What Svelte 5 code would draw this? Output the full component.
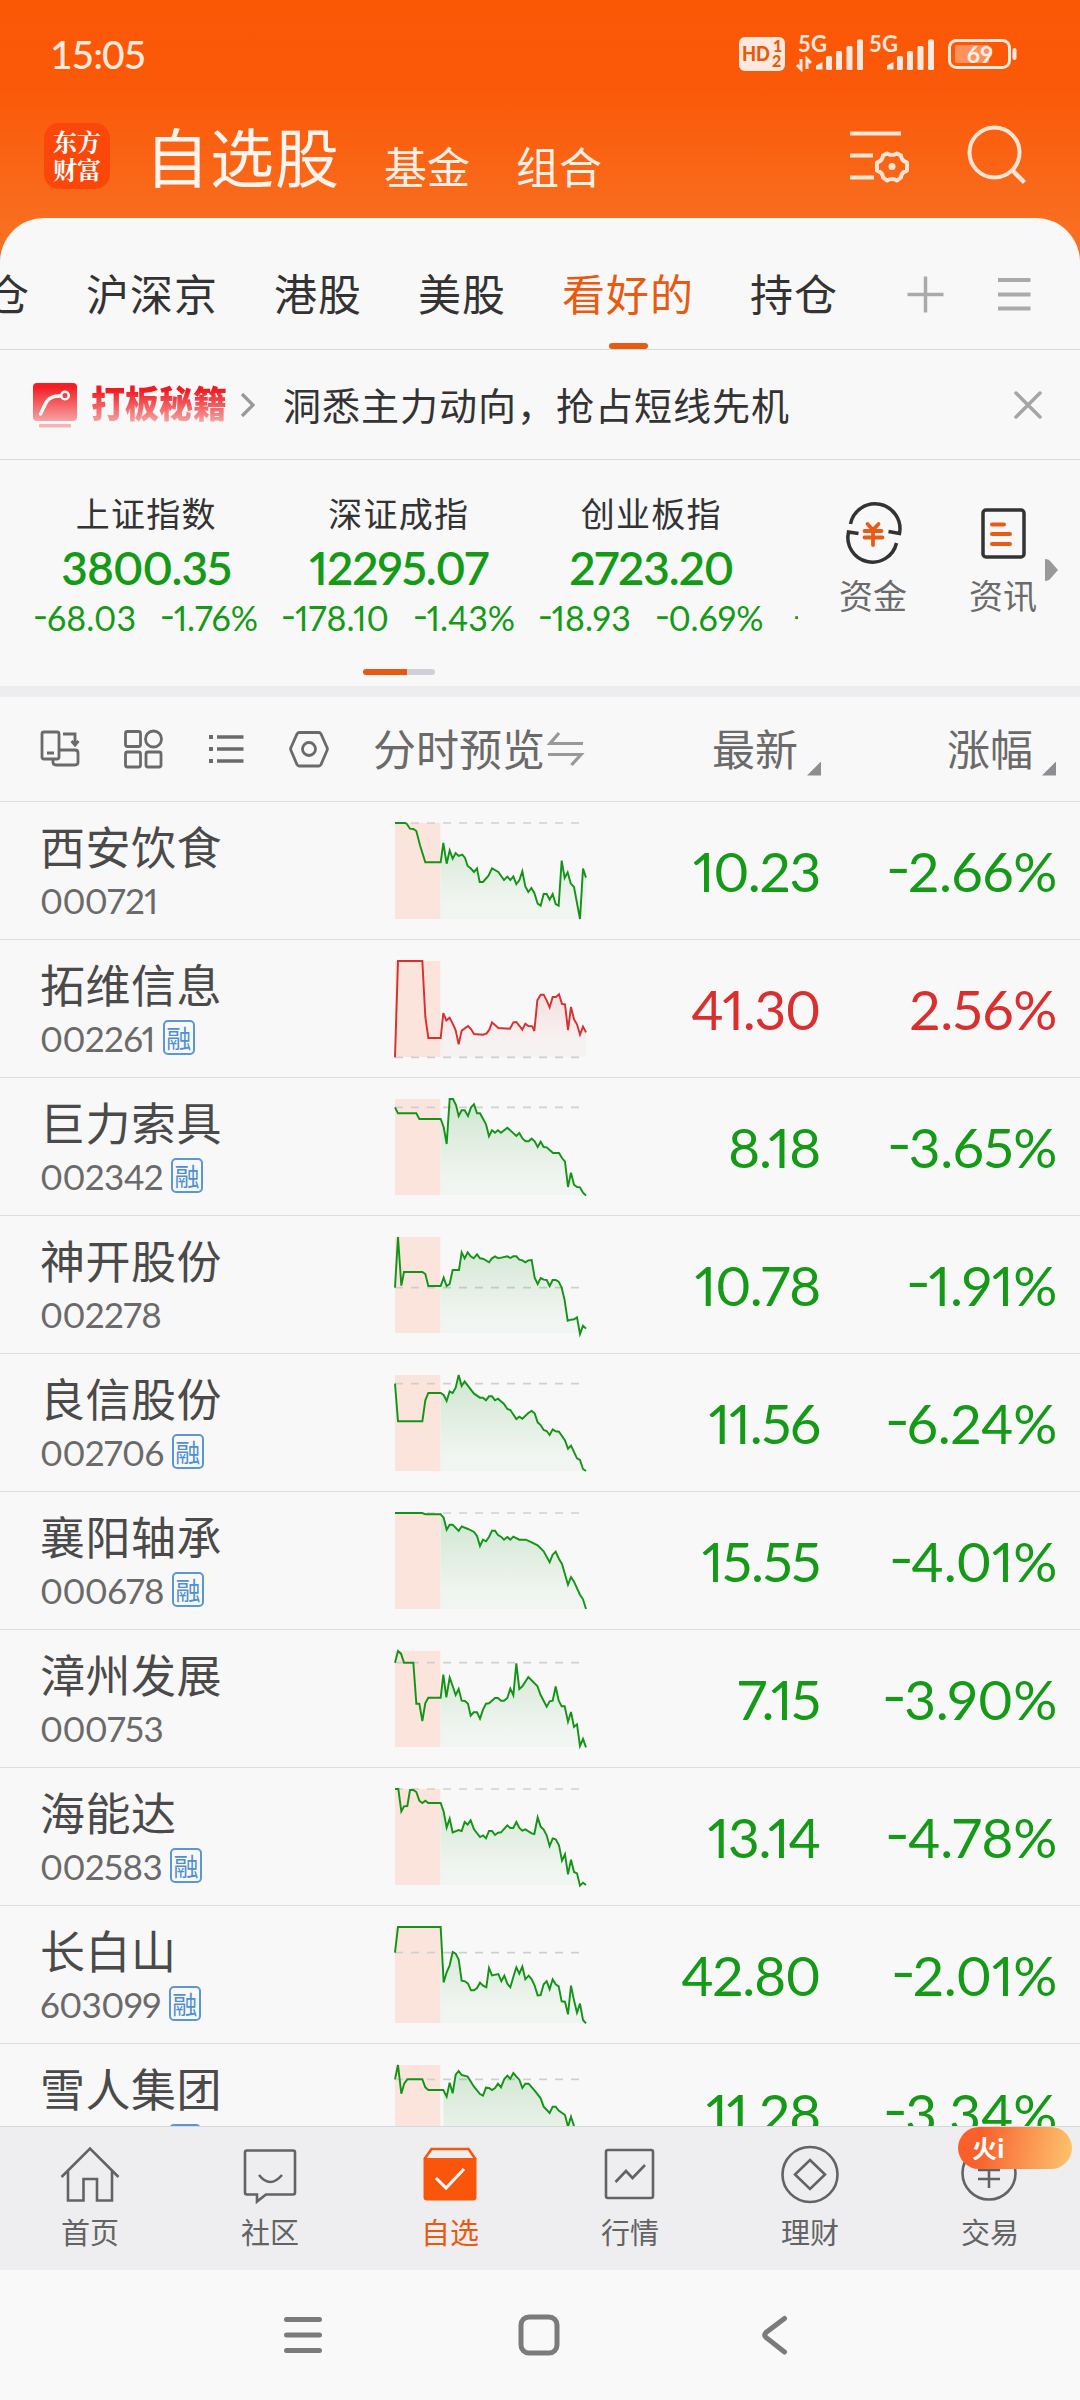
<script lang="ts">
	type Stock = {
		name: string;
		code: string;
		margin: boolean;
		price: string;
		pct: string;
		top: number;
		base: number;
		line: string;
	};

	const tabs = ['持仓', '沪深京', '港股', '美股', '看好的', '持仓'];
	const activeTab = 4;

	const indices = [
		{ name: '上证指数', value: '3800.35', diff: '-68.03', pct: '-1.76%' },
		{ name: '深证成指', value: '12295.07', diff: '-178.10', pct: '-1.43%' },
		{ name: '创业板指', value: '2723.20', diff: '-18.93', pct: '-0.69%' }
	];

	const navItems = ['首页', '社区', '自选', '行情', '理财', '交易'];

	// line: intraday points, top: y of the chart's upper edge, base: y of yesterday's close
	const stocks: Stock[] = [
		{
			name: '西安饮食', code: '000721', margin: false, price: '10.23', pct: '-2.66%', top: 98, base: 98,
			line: '45,98 75,98 80,100 90,115 100,116 109,122 120,165 136,216 182,216 190,158 200,220 209,180 218,205 227,188 236,197 247,193 255,203 263,227 272,234 282,245 291,234 299,275 309,275 325,257 336,234 355,245 372,269 382,259 391,269 400,258 409,281 418,270 427,243 436,288 445,305 454,293 463,308 473,340 482,346 491,311 500,311 509,328 518,311 527,341 536,346 545,211 554,263 563,246 572,279 582,290 600,386 609,235 618,262'
		},
		{
			name: '拓维信息', code: '002261', margin: true, price: '41.30', pct: '2.56%', top: 512, base: 801,
			line: '45,801 54,512 127,512 136,680 145,743 182,743 190,668 199,690 209,682 222,708 227,720 236,762 245,721 264,707 273,716 282,731 309,733 320,729 328,718 336,696 355,713 390,715 400,696 409,695 427,718 436,700 445,707 457,708 463,722 472,630 482,613 491,613 500,630 509,651 518,620 528,620 537,612 546,641 555,642 564,719 573,650 582,687 591,702 600,733 609,709 618,726'
		},
		{
			name: '巨力索具', code: '002342', margin: true, price: '8.18', pct: '-3.65%', top: 926, base: 951,
			line: '45,951 54,969 109,969 118,986 182,986 191,1010 200,1061 209,926 219,926 228,944 236,977 245,960 254,960 264,977 273,951 282,942 291,969 300,969 309,985 318,1002 327,1038 336,1020 345,1027 354,1020 363,1027 382,1012 409,1037 418,1028 428,1045 437,1053 446,1053 455,1045 464,1053 473,1070 482,1054 491,1070 500,1071 519,1088 537,1088 546,1103 555,1114 564,1190 573,1147 582,1183 591,1190 600,1191 609,1207 618,1216'
		},
		{
			name: '神开股份', code: '002278', margin: false, price: '10.78', pct: '-1.91%', top: 111, base: 263,
			line: '45,263 54,111 64,257 72,216 127,216 136,222 145,258 182,258 191,233 200,258 209,252 218,210 237,210 245,157 254,175 263,157 272,169 281,175 291,163 300,175 309,176 327,187 336,175 345,169 355,175 382,169 391,174 400,169 409,169 418,179 427,181 436,187 445,181 455,180 464,233 473,252 482,234 491,239 500,240 509,258 518,240 527,240 536,245 545,263 554,301 563,362 573,359 582,358 591,352 600,402 609,377 618,386'
		},
		{
			name: '良信股份', code: '002706', margin: true, price: '11.56', pct: '-6.24%', top: 525, base: 551,
			line: '45,551 54,664 127,664 136,601 145,579 182,579 191,585 200,603 209,574 218,579 227,563 236,525 245,558 254,544 272,568 282,581 300,593 309,593 318,601 327,589 336,589 345,601 354,596 372,612 382,627 391,630 409,657 418,650 427,656 445,639 455,633 464,640 473,667 482,675 491,690 500,693 509,705 518,688 527,694 537,695 555,721 564,746 573,737 591,775 600,780 609,807 618,813'
		},
		{
			name: '襄阳轴承', code: '000678', margin: true, price: '15.55', pct: '-4.01%', top: 938, base: 938,
			line: '45,938 127,938 136,942 182,942 191,952 200,988 209,973 218,973 236,992 245,978 264,986 282,995 291,1007 300,1037 309,1018 318,1023 327,1010 336,991 345,991 354,1004 363,1009 372,1018 382,1010 391,1018 400,1009 418,1018 437,1018 455,1026 473,1035 491,1053 509,1086 518,1063 527,1054 537,1076 546,1091 564,1153 573,1130 582,1144 600,1183 609,1197 618,1226'
		},
		{
			name: '漳州发展', code: '000753', margin: false, price: '7.15', pct: '-3.90%', top: 92, base: 127,
			line: '45,127 54,92 63,100 72,127 100,127 109,250 118,250 127,302 136,248 145,232 182,232 190,163 199,231 209,172 218,197 227,224 236,206 245,241 255,242 264,250 272,286 281,276 291,276 300,295 309,268 318,250 327,249 345,233 354,233 363,241 372,241 382,233 391,205 400,225 409,129 418,206 427,198 445,170 472,197 482,224 500,259 509,243 518,241 527,198 536,240 545,258 554,258 564,304 573,275 582,320 591,312 600,377 609,356 618,381'
		},
		{
			name: '海能达', code: '002583', margin: true, price: '13.14', pct: '-4.78%', top: 507, base: 507,
			line: '45,507 55,507 64,574 72,559 82,558 90,510 100,510 109,516 118,542 127,549 136,542 145,549 182,549 191,575 200,623 209,596 218,637 236,630 245,633 254,606 263,614 272,601 282,628 300,651 309,646 318,655 327,633 336,633 345,645 354,638 363,637 382,616 391,624 400,624 409,606 418,624 427,632 436,628 455,640 463,642 473,592 482,620 491,629 500,646 509,678 518,655 527,658 537,676 546,722 555,703 564,763 573,719 582,756 591,760 600,797 609,788 618,795'
		},
		{
			name: '长白山', code: '603099', margin: true, price: '42.80', pct: '-2.01%', top: 920, base: 997,
			line: '45,997 54,920 182,920 191,1086 200,1056 209,1035 218,995 227,1000 236,1018 245,1081 255,1083 264,1090 273,1110 282,1110 291,1103 300,1087 309,1096 319,1101 327,1043 336,1065 355,1061 364,1083 373,1066 382,1090 391,1101 400,1070 409,1041 418,1060 427,1039 436,1077 446,1066 455,1077 464,1096 473,1125 482,1124 491,1092 500,1083 509,1107 518,1077 527,1092 536,1098 545,1143 555,1144 564,1182 573,1096 582,1140 591,1177 600,1150 609,1199 618,1209'
		},
		{
			name: '雪人集团', code: '002639', margin: true, price: '11.28', pct: '-3.34%', top: 1335, base: 1378,
			line: '45,1378 54,1335 64,1421 73,1390 82,1378 127,1378 136,1402 145,1410 190,1410 200,1430 209,1388 218,1420 227,1364 236,1353 245,1365 263,1370 282,1400 300,1422 309,1427 318,1403 327,1404 336,1410 345,1404 354,1391 363,1402 373,1377 382,1367 391,1376 400,1359 409,1370 418,1379 427,1404 436,1391 446,1391 464,1412 482,1435 491,1460 509,1479 518,1460 527,1460 536,1472 555,1485 564,1520 573,1490 582,1518 600,1580 618,1623'
		}
	];

	// the fill only starts after the call auction, at x = 182
	function area(s: Stock) {
		const pts = s.line.split(' ').filter((p) => parseInt(p) >= 182);
		const start = pts[0].split(',')[0];
		return `${start},${s.top + 288} ${pts.join(' ')} 618,${s.top + 288}`;
	}
</script>

{#snippet signed(text: string)}
	{#if text.startsWith('-')}<span class="minus">-</span>{text.slice(1)}{:else}{text}{/if}
{/snippet}

<div class="phone">
	<div class="status">
		<span class="time">15:05</span>
		<svg class="signals" width="280" height="40" viewBox="738 34 280 40">
			<rect x="739" y="37" width="46" height="34" rx="6" fill="#ffe9de" />
			<g class="hd">
				<text x="742" y="61" font-size="21" textLength="28" lengthAdjust="spacingAndGlyphs">HD</text>
				<text x="773" y="52" font-size="16">1</text>
				<text x="772" y="67" font-size="16">2</text>
			</g>
			<g class="net">
				<text x="798" y="52" font-size="22" textLength="29">5G</text>
				<text x="869" y="52" font-size="22" textLength="29">5G</text>
			</g>
			<path d="M801 59v10l-4-4M807 69v-10l4 4" fill="none" stroke="#ffe9de" stroke-width="3" />
			{#each [0, 71] as dx}
				<g fill="#ffe9de">
					<path d="M{816 + dx} 69.500v-4l6.500-3.500v7.500z" />
					<rect x={826 + dx} y="56" width="6" height="14" rx="1.500" />
					<rect x={836 + dx} y="51" width="6" height="19" rx="1.500" />
					<rect x={846.5 + dx} y="46" width="6" height="24" rx="1.500" />
					<rect x={857 + dx} y="39.500" width="6" height="30.500" rx="1.500" />
				</g>
			{/each}
			<rect x="949.500" y="40.500" width="60" height="27" rx="7" fill="none" stroke="#ffe9de" stroke-width="3" />
			<rect x="955" y="45" width="34" height="18" rx="2" fill="#ff915c" />
			<path d="M1014.500 50v8" stroke="#ffe9de" stroke-width="4" stroke-linecap="round" />
			<text class="battery" x="980" y="62.500" font-size="23" text-anchor="middle">69</text>
		</svg>
	</div>

	<header>
		<div class="logo"><span>东方</span><span>财富</span></div>
		<h1>自选股</h1>
		<span class="section">基金</span>
		<span class="section">组合</span>
		<svg class="tools" width="180" height="60" viewBox="848 125 180 60" fill="none" stroke="#ffe3d3" stroke-width="4">
			<path d="M850 133.500h51M850 155.500h23M850 177.500h24" />
			<path
				d="M887 153.500q5 3 10 0l4 2q0 5 6 7v8q-6 2-6 7l-4 3q-5-3-10 0l-4-3q0-5-6-7v-8q6-2 6-7z"
				stroke-linejoin="round"
			/>
			<circle cx="892" cy="166.500" r="3.500" fill="#ffe3d3" stroke="none" />
			<circle cx="994.500" cy="152.500" r="25" />
			<path d="M1012 170l12.500 12.500" stroke-width="4.500" />
		</svg>
	</header>

	<main>
		<nav class="tabs">
			<div class="tab-list">
				{#each tabs as tab, i}
					<span class="tab" class:active={i === activeTab}>{tab}</span>
				{/each}
			</div>
			<svg width="108" height="40" viewBox="906 274 108 40" fill="none" stroke="#aaa" stroke-width="4">
				<path d="M907.500 294.500h36M925.500 276.500v36" stroke-width="3.500" />
			</svg>
			<svg class="menu" width="34" height="40" viewBox="997 274 34 40" stroke="#aaa" stroke-width="4">
				<path d="M998 280h32.500M998 294.500h32.500M998 308.500h32.500" />
			</svg>
		</nav>

		<div class="notice">
			<svg width="44" height="46" viewBox="33 381 44 46">
				<defs>
					<linearGradient id="promo" x1="0" y1="0" x2="0" y2="1">
						<stop offset="0.100" stop-color="#f41d22" />
						<stop offset="1" stop-color="#f6a3a3" />
					</linearGradient>
				</defs>
				<rect x="33" y="382" width="44" height="38" rx="4" fill="url(#promo)" />
				<rect x="39" y="423" width="32" height="3.500" rx="1" fill="#f6b4b4" />
				<path d="M40.500 413c5-9 6-19 20-18" fill="none" stroke="#fff" stroke-width="3.500" stroke-linecap="round" />
				<circle cx="65" cy="394.500" r="3.800" fill="none" stroke="#fff" stroke-width="2.500" />
			</svg>
			<strong>打板秘籍</strong>
			<svg class="chevron" width="15" height="26" viewBox="240 392 15 26" fill="none" stroke="#999" stroke-width="3.200">
				<path d="M242 394l11 11-11 11" />
			</svg>
			<p>洞悉主力动向，抢占短线先机</p>
			<svg class="close" width="30" height="30" viewBox="1013 390 30 30" stroke="#a5a5a5" stroke-width="3.500" stroke-linecap="round">
				<path d="M1016 393l24 24M1040 393l-24 24" />
			</svg>
		</div>

		<section class="market">
			<div class="indices">
				{#each indices as idx}
					<div class="index">
						<span class="idx-name">{idx.name}</span>
						<span class="idx-value">{idx.value}</span>
						<span class="idx-diff">
							<i>{@render signed(idx.diff)}</i>
							<i>{@render signed(idx.pct)}</i>
						</span>
					</div>
				{/each}
				<div class="index more"><span class="idx-diff"><i>{@render signed('-')}</i></span></div>
			</div>
			<div class="shortcut">
				<svg width="56" height="56" viewBox="845 505 56 56" fill="none" stroke="#333" stroke-width="3.500">
					<path d="M850.500 524a24.500 24.500 0 0 1 49 9.500l-11-2" />
					<path d="M896.500 543a24.500 24.500 0 0 1-48-11l10 1.500" />
					<path
						d="M867.500 524l5.500 6 5.500-6M864.500 531h17M864.500 537.500h18M873 530v15"
						stroke="#e85b16"
						stroke-linecap="round"
						stroke-width="3.800"
					/>
				</svg>
				<span>资金</span>
			</div>
			<div class="shortcut">
				<svg width="56" height="56" viewBox="975 505 56 56" fill="none" stroke="#333" stroke-width="3.500">
					<rect x="983" y="510" width="41" height="47" rx="3" />
					<path d="M992 524.500h12M992 534h18M992 544h18" stroke="#e85b16" stroke-width="4" stroke-linecap="round" />
				</svg>
				<span>资讯</span>
			</div>
			<svg class="next" width="14" height="24" viewBox="0 0 14 24">
				<path d="M0 1q4 0 6 3l7 8-7 8q-2 3-6 3z" fill="#999" />
			</svg>
			<div class="pager"></div>
		</section>

		<div class="toolbar">
			<svg width="300" height="44" viewBox="36 727 300 44" fill="none" stroke="#6a6a6a" stroke-width="2.800">
				<rect x="42" y="732" width="17" height="27" rx="2" />
				<path d="M47 753h7M63 734h12v10M71.500 741l3.500 4 3.500-4M59 750h16q3 0 3 3v9q0 3-3 3H56q-3 0-3-3v-3" />
				<rect x="125.500" y="731.500" width="15" height="15" rx="2" />
				<circle cx="153.500" cy="739" r="8" />
				<rect x="125.500" y="752" width="15" height="15" rx="2" />
				<rect x="146" y="752" width="15" height="15" rx="2" />
				<path d="M217 737h26.500M217 749h26.500M217 761h26.500" stroke-width="3.500" />
				<path d="M209 737h4M209 749h4M209 761h4" stroke-width="4" />
				<path d="M299 732.500h20q1 0 2 1.500l6 13.500q.8 1.500 0 3l-6 14q-1 1.500-2 1.500h-20q-1 0-2-1.500l-6-14q-.8-1.500 0-3l6-13.500q1-1.500 2-1.500z" />
				<circle cx="309" cy="749" r="6.500" />
			</svg>
			<span class="col preview">分时预览</span>
			<svg class="swap" width="38" height="36" viewBox="546 730 38 36" fill="none" stroke="#999" stroke-width="3.200">
				<path d="M583 742.500h-33l9-10.500M548 753.500h33l-9.500 10.500" />
			</svg>
			<span class="col sortable latest">最新</span>
			<span class="col sortable change">涨幅</span>
		</div>

		<div class="list">
			{#each stocks as s, i}
				{@const color = s.pct.startsWith('-') ? '#149417' : '#d9302f'}
				<div class="row" class:up={!s.pct.startsWith('-')}>
					<div class="who">
						<span class="name">{s.name}</span>
						<span class="code">
							{s.code}
							{#if s.margin}<b>融</b>{/if}
						</span>
					</div>
					<svg class="spark" width="191" height="96" viewBox="45 {s.top} 573 288">
						<defs>
							<linearGradient id="fill{i}" x1="0" y1={s.top} x2="0" y2={s.top + 288} gradientUnits="userSpaceOnUse">
								<stop offset="0" stop-color={color} stop-opacity="0.180" />
								<stop offset="0.850" stop-color={color} stop-opacity="0.030" />
							</linearGradient>
						</defs>
						<rect x="45" y={s.top} width="136" height="288" fill="#fae4dc" />
						<path d="M45 {s.base}H600" stroke="#cfcfd1" stroke-width="5" stroke-dasharray="24 24" />
						<polygon points={area(s)} fill="url(#fill{i})" />
						<polyline points={s.line} fill="none" stroke={color} stroke-width="5.800" />
					</svg>
					<span class="price">{s.price}</span>
					<span class="pct">{@render signed(s.pct)}</span>
				</div>
			{/each}
		</div>
	</main>

	<nav class="bottom">
		{#each navItems as item, i}
			<div class="nav-item" class:active={item === '自选'}>
				<svg width="60" height="60" viewBox="0 0 60 60" fill="none" stroke="#636363" stroke-width="2.600">
					{#if i === 0}
						<path d="M1.500 33L30 4.500 58.500 33M8 27v29.500h15.500V35h13.500v21.500H52V27" />
					{:else if i === 1}
						<path d="M7 6.500h46q2 0 2 2v40q0 2-2 2H26l-9 7v-7H7q-2 0-2-2v-40q0-2 2-2z" />
						<path d="M19 31q11 14 23 0" />
					{:else if i === 2}
						<path d="M3.500 14h53v39q0 3.500-3.500 3.500H7q-3.500 0-3.500-3.500z" fill="#f9560b" stroke="none" />
						<path d="M4.500 15l7-10h37l7 10" stroke="#f9560b" />
						<path d="M16 34l10 10 18-19" stroke="#fff" stroke-width="3" />
					{:else if i === 3}
						<rect x="6" y="6" width="47" height="48" rx="2" />
						<path d="M15.500 38l10.500-11 6.500 7L45 21" />
					{:else if i === 4}
						<circle cx="30" cy="30.500" r="27.500" />
						<path d="M30 16l15 14.500L30 45 15 30.500z" />
					{:else}
						<circle cx="29" cy="29" r="26.500" />
						<path d="M18.500 13l10.500 12 10.500-12M18 26h22M18 35h22M29 25v19" />
					{/if}
				</svg>
				<span>{item}</span>
				{#if i === 5}<em>火i</em>{/if}
			</div>
		{/each}
	</nav>

	<div class="system">
		<svg width="530" height="50" viewBox="270 2310 530 50" fill="none" stroke="#7b7b7b" stroke-width="5" stroke-linecap="round">
			<path d="M286.500 2319.500h33M286.500 2335h33M286.500 2350.500h33" />
			<rect x="521" y="2317" width="36" height="36" rx="8" />
			<path d="M784.500 2318.500L766 2332.500q-2.500 2.500 0 5l18.500 14.500" />
		</svg>
	</div>
</div>

<style>
	:global(body) {
		background: #f8f8f8;
	}

	.phone {
		width: 1080px;
		height: 2400px;
		display: flex;
		flex-direction: column;
		overflow: hidden;
		background: linear-gradient(#fb5806 0, #fa5908 90px, #f96e20 225px, #f9701f 270px);
		font-family: 'Noto Sans CJK SC', sans-serif;
		color: #333;
		white-space: nowrap;
	}

	.phone * {
		box-sizing: border-box;
	}

	svg {
		display: block;
		flex: none;
		overflow: visible;
	}

	.minus {
		display: inline-block;
		transform: translateY(-0.1em) scaleX(1.25);
	}

	.status {
		height: 108px;
		padding: 0 62px 0 50px;
		display: flex;
		justify-content: space-between;
		align-items: center;
	}
	.time {
		color: #ffeadf;
		font-family: Lato, sans-serif;
		font-size: 39px;
		font-weight: 500;
		line-height: 40px;
		letter-spacing: -1px;
	}
	.hd {
		font-family: Lato, sans-serif;
		font-weight: 900;
		fill: #e8590c;
	}
	.net {
		font-family: Lato, sans-serif;
		font-weight: 700;
		fill: #ffe9de;
	}
	.battery {
		font-family: Lato, sans-serif;
		font-weight: 700;
		fill: #fff1ea;
	}

	header {
		height: 110px;
		padding: 0 52px 0 44px;
		display: flex;
		align-items: flex-start;
	}
	.logo {
		width: 66px;
		height: 66px;
		margin: 15px 35px 0 0;
		padding-top: 4px;
		border-radius: 15px;
		background: #fb480a;
		color: #fff;
		font-family: 'Noto Serif CJK SC', 'Noto Sans CJK SC', serif;
		font-weight: 700;
		font-size: 24px;
		line-height: 28px;
		display: flex;
		flex-direction: column;
		align-items: center;
	}
	h1 {
		margin: 0;
		color: #fff4ed;
		font-weight: 400;
		font-size: 64px;
		line-height: 92px;
		letter-spacing: 1px;
	}
	.section {
		margin-left: 44px;
		color: #fff0e7;
		font-size: 43px;
		line-height: 114px;
	}
	.section + .section {
		margin-left: 46px;
	}
	.tools {
		margin: 17px 0 0 auto;
	}

	main {
		flex: 1;
		min-height: 0;
		display: flex;
		flex-direction: column;
		background: #f8f8f8;
		border-radius: 44px 44px 0 0;
		overflow: hidden;
	}

	.tabs {
		flex: none;
		height: 132px;
		display: flex;
		align-items: center;
		padding: 0 49px 0 0;
		border-bottom: 1px solid #d9d9d9;
	}
	.tabs svg {
		margin-top: 21px;
	}
	.tabs .menu {
		margin-left: -17px;
	}
	.tab-list {
		display: flex;
		gap: 56px;
		margin: 0 auto 0 -58px;
	}
	.tab {
		height: 131px;
		font-size: 43px;
		letter-spacing: 1px;
		line-height: 148px;
		display: flex;
		flex-direction: column;
		align-items: center;
	}
	.tab.active {
		color: #e95a11;
	}
	.tab.active::after {
		content: '';
		width: 39px;
		height: 6px;
		margin-top: -23px;
		border-radius: 3px;
		background: #e95a11;
	}

	.notice {
		flex: none;
		height: 110px;
		padding: 0 37px 0 33px;
		display: flex;
		align-items: center;
		border-bottom: 1px solid #d9d9d9;
	}
	.notice strong {
		margin: 0 0 4px 14px;
		font-weight: 900;
		font-size: 34px;
		line-height: 48px;
		background: linear-gradient(#f01a20 25%, #f5a0a0 85%);
		-webkit-background-clip: text;
		background-clip: text;
		color: transparent;
		transform: scaleY(1.1);
	}
	.chevron {
		margin-left: 13px;
	}
	.notice p {
		margin: 0 auto 3px 28px;
		font-size: 38px;
		letter-spacing: 1px;
	}

	.market {
		flex: none;
		height: 237px;
		position: relative;
		display: flex;
		border-bottom: 11px solid #ededef;
	}
	.indices {
		width: 778px;
		margin-left: 20px;
		display: flex;
		overflow: hidden;
	}
	.index {
		flex: none;
		width: 252.500px;
		padding-top: 34px;
		display: flex;
		flex-direction: column;
		align-items: center;
	}
	.index.more {
		padding: 139px 0 0 16px;
		align-items: flex-start;
	}
	.idx-name {
		font-size: 34px;
		letter-spacing: 1.200px;
		line-height: 38px;
	}
	.idx-value {
		font-family: Lato, sans-serif;
		font-variant-numeric: proportional-nums;
		font-weight: 600;
		font-size: 46px;
		letter-spacing: -1px;
		line-height: 55px;
		margin-top: 8px;
		color: #149a17;
	}
	.idx-diff {
		display: flex;
		gap: 25px;
		color: #149a17;
		font-family: Lato, sans-serif;
		font-variant-numeric: proportional-nums;
		font-size: 34px;
		line-height: 38px;
	}
	.index:not(.more) .idx-diff {
		margin-top: 4px;
	}
	.idx-diff i {
		font-style: normal;
	}
	.shortcut {
		width: 130px;
		padding-top: 45px;
		display: flex;
		flex-direction: column;
		align-items: center;
		color: #6b6b6b;
		font-size: 34px;
		line-height: 54px;
	}
	.shortcut:nth-child(2) {
		margin-left: 10px;
	}
	.shortcut span {
		margin-top: 7px;
	}
	.next {
		position: absolute;
		left: 1045px;
		top: 98px;
	}
	.pager {
		position: absolute;
		left: 363px;
		top: 209px;
		width: 72px;
		height: 6px;
		border-radius: 3px;
		background: linear-gradient(to right, #e55a12 44px, #cfd1d6 44px);
	}

	.toolbar {
		flex: none;
		height: 105px;
		padding-left: 36px;
		display: flex;
		align-items: center;
		border-bottom: 1px solid #dedede;
		color: #6a6a6a;
	}
	.col {
		margin-bottom: 5px;
		font-size: 43px;
		line-height: 60px;
	}
	.preview {
		margin-left: 37px;
	}
	.swap {
		margin-left: 1px;
	}
	.sortable {
		display: flex;
		align-items: flex-end;
		justify-content: flex-end;
	}
	.sortable::after {
		content: '';
		width: 14px;
		height: 14px;
		margin: 0 0 1px 9px;
		background: #8e8e92;
		clip-path: polygon(100% 0, 100% 100%, 0 100%);
	}
	.latest {
		width: 237px;
	}
	.change {
		width: 235px;
	}

	.list {
		flex: 1;
		min-height: 0;
		overflow: hidden;
	}
	.row {
		height: 138px;
		padding-left: 40px;
		display: flex;
		align-items: center;
		border-bottom: 1px solid #dedede;
		color: #149a17;
	}
	.row.up {
		color: #d9302f;
	}
	.who {
		width: 355px;
		display: flex;
		flex-direction: column;
	}
	.name {
		color: #4a4a4a;
		font-size: 45px;
		letter-spacing: 0.500px;
		line-height: 56px;
	}
	.code {
		margin-top: 2px;
		display: flex;
		align-items: center;
		gap: 8px;
		color: #6a6a6a;
		font-family: Lato, sans-serif;
		font-variant-numeric: proportional-nums;
		font-size: 35px;
		letter-spacing: -0.6px;
		line-height: 48px;
	}
	.code b {
		width: 32px;
		height: 35px;
		border: 2px solid #5b97d3;
		border-radius: 5px;
		color: #4f8fd0;
		font: 400 25px/30px 'Noto Sans CJK SC', sans-serif;
		letter-spacing: 0;
		display: flex;
		justify-content: center;
	}
	.price,
	.pct {
		font-family: Lato, sans-serif;
		font-variant-numeric: proportional-nums;
		font-size: 55px;
		line-height: 60px;
		text-align: right;
	}
	.price {
		width: 234px;
		letter-spacing: -1.2px;
	}
	.pct {
		width: 237px;
		letter-spacing: -0.3px;
	}

	.bottom {
		flex: none;
		height: 144px;
		display: grid;
		grid-template-columns: repeat(6, 1fr);
		background: #eeeef0;
		border-top: 1px solid #d5d8dc;
	}
	.nav-item {
		position: relative;
		padding-top: 17px;
		display: flex;
		flex-direction: column;
		align-items: center;
		color: #636363;
		font-size: 29px;
		line-height: 40px;
	}
	.nav-item span {
		margin-top: 7px;
	}
	.nav-item.active {
		color: #e95a11;
	}
	.nav-item em {
		position: absolute;
		left: 58px;
		top: 0;
		width: 114px;
		height: 42px;
		padding-left: 14px;
		border-radius: 21px;
		background: linear-gradient(100deg, #f9602c 20%, #fb8d4c 55%, #fcc66c);
		color: #fff;
		font-style: normal;
		font-weight: 700;
		font-size: 25px;
	}

	.system {
		flex: none;
		height: 130px;
		padding-top: 40px;
		background: #f9f9f9;
	}
	.system svg {
		margin-left: 270px;
	}
</style>
